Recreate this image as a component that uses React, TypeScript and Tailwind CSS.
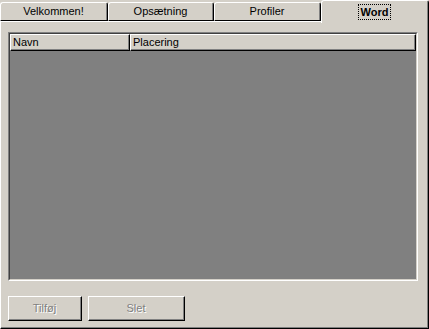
import React from 'react';

const tabs = [
  { label: 'Velkommen!', w: 'w-[108px]' },
  { label: 'Opsætning', w: 'w-[106px]' },
  { label: 'Profiler', w: 'w-[107px]' },
];

function InactiveTab({ label, w }: { label: string; w: string }) {
  return (
    <div className={`${w} h-[19px] border-t border-l border-white border-r border-r-black border-b border-b-black rounded-tl-[3px] rounded-tr-[3px]`}>
      <div className="h-full border-r border-[#808080] flex items-center justify-center pb-[1px] text-black">
        {label}
      </div>
    </div>
  );
}

function Button95({ label, w }: { label: string; w: string }) {
  return (
    <div className={`${w} h-[25px] border-t border-l border-white border-r border-b border-r-black border-b-black`}>
      <div className="h-full border-r border-b border-[#808080] flex items-center justify-center text-[#808080] [text-shadow:1px_1px_0_#fff]">
        {label}
      </div>
    </div>
  );
}

export default function App() {
  return (
    <div className="w-[429px] h-[329px] bg-[#d4d0c8] flex flex-col font-['Liberation_Sans',Arial,sans-serif] text-[11px] leading-none overflow-hidden">
      {/* Tab strip */}
      <div className="flex items-end h-[21px] relative z-10">
        {tabs.map((t) => (
          <InactiveTab key={t.label} label={t.label} w={t.w} />
        ))}
        <div className="w-[108px] h-[23px] -mb-[2px] bg-[#d4d0c8] border-t border-l border-white border-r border-r-black rounded-tl-[3px] rounded-tr-[3px]">
          <div className="h-full border-r border-[#808080] flex justify-center pt-[3px]">
            <span className="h-[16px] px-[2px] border border-dotted border-black font-bold text-black flex items-center">
              Word
            </span>
          </div>
        </div>
      </div>

      {/* Panel */}
      <div className="flex-1 border-t border-l border-white border-r border-b border-r-black border-b-black">
        <div className="h-full border-r border-b border-[#808080] pl-[7px] pt-[10px] flex flex-col">
          {/* List view */}
          <div className="w-[410px] h-[249px] border-t border-l border-[#808080] border-r border-b border-r-white border-b-white">
            <div className="h-full border-t border-l border-[#404040] border-r border-b border-r-[#d4d0c8] border-b-[#d4d0c8] bg-[#808080] flex flex-col">
              <div className="flex h-[17px] bg-[#d4d0c8]">
                <div className="w-[120px] border-t border-l border-white border-r border-b border-r-black border-b-black">
                  <div className="h-full border-r border-b border-[#808080] flex items-center pl-[2px] text-black">Navn</div>
                </div>
                <div className="flex-1 border-t border-l border-white border-r border-b border-r-black border-b-black">
                  <div className="h-full border-r border-b border-[#808080] flex items-center pl-[2px] text-black">Placering</div>
                </div>
              </div>
            </div>
          </div>

          {/* Buttons */}
          <div className="flex gap-[6px] mt-[15px]">
            <Button95 label="Tilføj" w="w-[74px]" />
            <Button95 label="Slet" w="w-[97px]" />
          </div>
        </div>
      </div>
    </div>
  );
}
